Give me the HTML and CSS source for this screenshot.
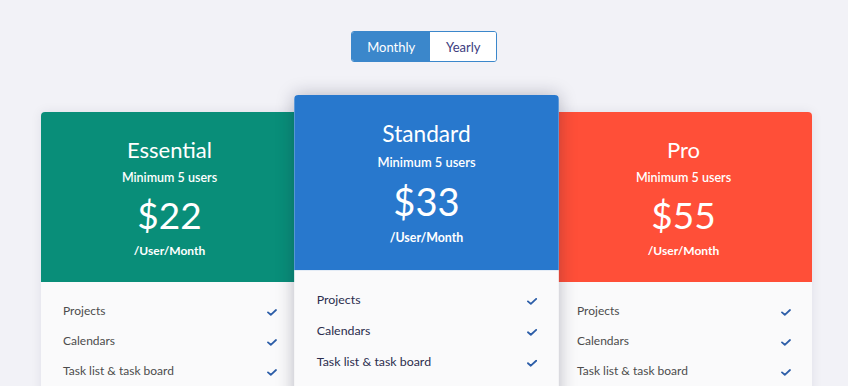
FILE: index.html
```html
<!DOCTYPE html>
<html lang="en">
<head>
<meta charset="utf-8">
<title>Pricing</title>
<link rel="stylesheet" href="styles.css">
</head>
<body>
<div class="page">
  <div class="toggle">
    <button class="toggle__btn toggle__btn--active">Monthly</button>
    <button class="toggle__btn">Yearly</button>
  </div>
  <div class="plans">
    <div class="card card--essential">
      <div class="card__head">
        <div class="card__title">Essential</div>
        <div class="card__min">Minimum 5 users</div>
        <div class="card__price">$22</div>
        <div class="card__per">/User/Month</div>
      </div>
      <ul class="card__list">
        <li class="feat"><span>Projects</span><svg class="check" viewBox="0 0 10 7"><path d="M1 3.4 L3.8 5.8 L9 1"/></svg></li>
        <li class="feat"><span>Calendars</span><svg class="check" viewBox="0 0 10 7"><path d="M1 3.4 L3.8 5.8 L9 1"/></svg></li>
        <li class="feat"><span>Task list &amp; task board</span><svg class="check" viewBox="0 0 10 7"><path d="M1 3.4 L3.8 5.8 L9 1"/></svg></li>
      </ul>
    </div>
    <div class="card card--standard">
      <div class="card__head">
        <div class="card__title">Standard</div>
        <div class="card__min">Minimum 5 users</div>
        <div class="card__price">$33</div>
        <div class="card__per">/User/Month</div>
      </div>
      <ul class="card__list">
        <li class="feat"><span>Projects</span><svg class="check" viewBox="0 0 10 7"><path d="M1 3.4 L3.8 5.8 L9 1"/></svg></li>
        <li class="feat"><span>Calendars</span><svg class="check" viewBox="0 0 10 7"><path d="M1 3.4 L3.8 5.8 L9 1"/></svg></li>
        <li class="feat"><span>Task list &amp; task board</span><svg class="check" viewBox="0 0 10 7"><path d="M1 3.4 L3.8 5.8 L9 1"/></svg></li>
      </ul>
    </div>
    <div class="card card--pro">
      <div class="card__head">
        <div class="card__title">Pro</div>
        <div class="card__min">Minimum 5 users</div>
        <div class="card__price">$55</div>
        <div class="card__per">/User/Month</div>
      </div>
      <ul class="card__list">
        <li class="feat"><span>Projects</span><svg class="check" viewBox="0 0 10 7"><path d="M1 3.4 L3.8 5.8 L9 1"/></svg></li>
        <li class="feat"><span>Calendars</span><svg class="check" viewBox="0 0 10 7"><path d="M1 3.4 L3.8 5.8 L9 1"/></svg></li>
        <li class="feat"><span>Task list &amp; task board</span><svg class="check" viewBox="0 0 10 7"><path d="M1 3.4 L3.8 5.8 L9 1"/></svg></li>
      </ul>
    </div>
  </div>
</div>
</body>
</html>
```
FILE: styles.css
```css
* { box-sizing: border-box; }
html, body {
  margin: 0;
  height: 100%;
  overflow: hidden;
  background: #f2f2f7;
  font-family: Lato, "Noto Sans", sans-serif;
}
.page {
  padding-top: 31px;
}
.toggle {
  display: flex;
  width: 146px;
  height: 31px;
  margin: 0 auto;
  border: 1px solid #3b87cb;
  border-radius: 3px;
  overflow: hidden;
  background: #fff;
}
.toggle__btn {
  border: 0;
  margin: 0;
  padding: 0;
  font-family: inherit;
  font-size: 13px;
  background: #fff;
  color: #3c3c7e;
  width: 66px;
  height: 100%;
}
.toggle__btn--active {
  width: 79px;
  background: #3b87cb;
  color: #fff;
}
.plans {
  display: flex;
  align-items: flex-start;
  padding-left: 41px;
  margin-top: 33px;
}
.card {
  width: 257px;
  flex: none;
  margin-top: 17px;
  border-radius: 4px 4px 0 0;
  overflow: hidden;
  background: #fafafb;
  box-shadow: 0 0 12px rgba(30, 30, 60, 0.08);
}
.card--standard {
  position: relative;
  z-index: 2;
  margin-top: 0;
  transform: scale(1.03);
  transform-origin: top center;
  box-shadow: 0 0 18px rgba(20, 20, 50, 0.28);
}
.card__head {
  padding: 24px 0 23px;
  text-align: center;
  color: #fff;
}
.card--essential .card__head { background: #098e79; }
.card--standard .card__head { background: #2878cd; }
.card--pro .card__head { background: #ff4f38; }
.card__title {
  font-size: 22px;
  line-height: 28px;
}
.card__min {
  margin-top: 6px;
  font-size: 12.5px;
  line-height: 16px;
  font-weight: 600;
}
.card__price {
  margin-top: 7px;
  font-size: 37px;
  line-height: 44px;
}
.card__per {
  margin-top: 6px;
  font-size: 12px;
  line-height: 16px;
  font-weight: 700;
}
.card__list {
  list-style: none;
  margin: 0;
  padding: 13px 21px 60px 22px;
}
.feat {
  display: flex;
  align-items: center;
  justify-content: space-between;
  height: 30px;
  font-size: 12px;
  color: #4c4c4c;
}
.card--standard .feat { color: #2b2d4d; }
.check {
  width: 10px;
  height: 7px;
  margin-top: 5px;
  fill: none;
  stroke: #2d5ea8;
  stroke-width: 1.8;
  stroke-linecap: round;
  stroke-linejoin: round;
}
```
